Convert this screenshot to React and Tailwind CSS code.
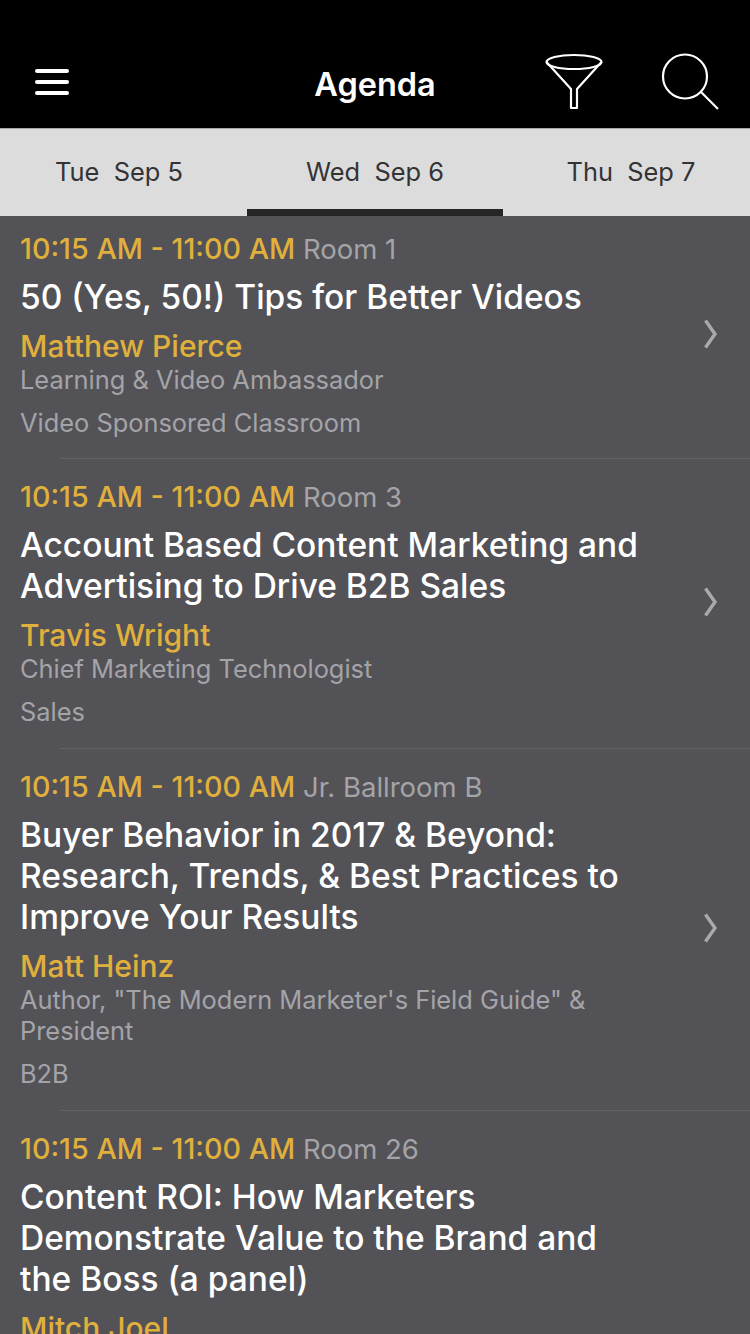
import React from 'react';

const font = { fontFamily: 'Inter, "Noto Sans", sans-serif' };

const sessions = [
  {
    room: 'Room 1',
    title: '50 (Yes, 50!) Tips for Better Videos',
    speaker: 'Matthew Pierce',
    job: 'Learning & Video Ambassador',
    track: 'Video Sponsored Classroom',
  },
  {
    room: 'Room 3',
    title: 'Account Based Content Marketing and Advertising to Drive B2B Sales',
    speaker: 'Travis Wright',
    job: 'Chief Marketing Technologist',
    track: 'Sales',
  },
  {
    room: 'Jr. Ballroom B',
    title: 'Buyer Behavior in 2017 & Beyond: Research, Trends, & Best Practices to Improve Your Results',
    speaker: 'Matt Heinz',
    job: 'Author, "The Modern Marketer\'s Field Guide" & President',
    track: 'B2B',
  },
  {
    room: 'Room 26',
    title: 'Content ROI: How Marketers Demonstrate Value to the Brand and the Boss (a panel)',
    speaker: 'Mitch Joel',
  },
];

const tabs = ['Tue  Sep 5', 'Wed  Sep 6', 'Thu  Sep 7'];

const FunnelIcon = () => (
  <svg width="58" height="58" viewBox="0 0 58 58" fill="none" stroke="white" strokeWidth="2.2" strokeLinejoin="round">
    <ellipse cx="29" cy="9" rx="27.5" ry="7" />
    <path d="M1.5 9 L26 36 V55 H32 V36 L56.5 9" />
  </svg>
);

const SearchIcon = () => (
  <svg width="58" height="58" viewBox="0 0 58 58" fill="none" stroke="white" strokeWidth="2.2">
    <circle cx="24" cy="23.5" r="22" />
    <path d="M40 39 L57 56" />
  </svg>
);

const Chevron = () => (
  <svg width="16" height="30" viewBox="0 0 16 30" fill="none" stroke="#a9a9ac" strokeWidth="3.4">
    <path d="M3.5 1.5 L13 15 L3.5 28.5" />
  </svg>
);

function Session({ session, index }) {
  // first row sits tighter under the tabs, last one runs past the bottom of the screen
  const top = index === 0 ? 'pt-[17px]' : 'pt-[22px]';
  const bottom = index === 0 ? 'pb-[21px]' : 'pb-[22px]';
  const textHeight = index === 3 ? 'h-[480px]' : '';

  return (
    <div className={`relative flex items-center ${top} ${bottom} pl-[20px]`}>
      <div className={`w-[626px] shrink-0 ${textHeight}`}>
        <div className="text-[27.5px] leading-[32px] text-[#a4a4a8]">
          <span className="text-[28.7px] font-medium text-[#e0b03c]">10:15 AM - 11:00 AM</span> {session.room}
        </div>
        <div className="mt-[12px] text-[33.5px] leading-[41px] font-medium text-white">{session.title}</div>
        <div className="mt-[13px] text-[30px] leading-[30px] font-medium text-[#e0b03c]">{session.speaker}</div>
        {session.job && <div className="mt-[3px] text-[25.4px] leading-[31px] text-[#a4a4a8]">{session.job}</div>}
        {session.track && <div className="mt-[12px] text-[25.4px] leading-[31px] text-[#a4a4a8]">{session.track}</div>}
      </div>
      <div className="-mt-[4px] ml-[56px]">
        <Chevron />
      </div>
      <div className="absolute bottom-0 left-[60px] right-0 h-px bg-[#636367]" />
    </div>
  );
}

export default function App() {
  return (
    <div className="h-[1334px] w-[750px] overflow-hidden bg-[#535257]" style={font}>
      <div className="grid h-[128px] grid-cols-3 bg-black">
        <div className="flex items-center pl-[35px] pt-[36px]">
          <div className="flex w-[34px] flex-col gap-[7px]">
            <div className="h-[4px] rounded-full bg-white" />
            <div className="h-[4px] rounded-full bg-white" />
            <div className="h-[4px] rounded-full bg-white" />
          </div>
        </div>
        <div className="flex items-center justify-center pt-[43px] text-[32.5px] font-semibold text-white">Agenda</div>
        <div className="flex items-start justify-end gap-[58px] pr-[31px] pt-[53px]">
          <FunnelIcon />
          <SearchIcon />
        </div>
      </div>
      <div className="flex h-[88px] -ml-[9px] w-[768px] border-t border-[#a8a8a8] bg-[#dcdcdc]">
        {tabs.map((tab, i) => (
          <div key={tab} className="relative flex w-[256px] items-center justify-center text-[25.4px] whitespace-pre text-[#333336]">
            {tab}
            {i === 1 && <div className="absolute bottom-0 left-0 right-0 h-[7px] bg-[#262626]" />}
          </div>
        ))}
      </div>
      <div>
        {sessions.map((s, i) => (
          <Session key={s.room} session={s} index={i} />
        ))}
      </div>
    </div>
  );
}
